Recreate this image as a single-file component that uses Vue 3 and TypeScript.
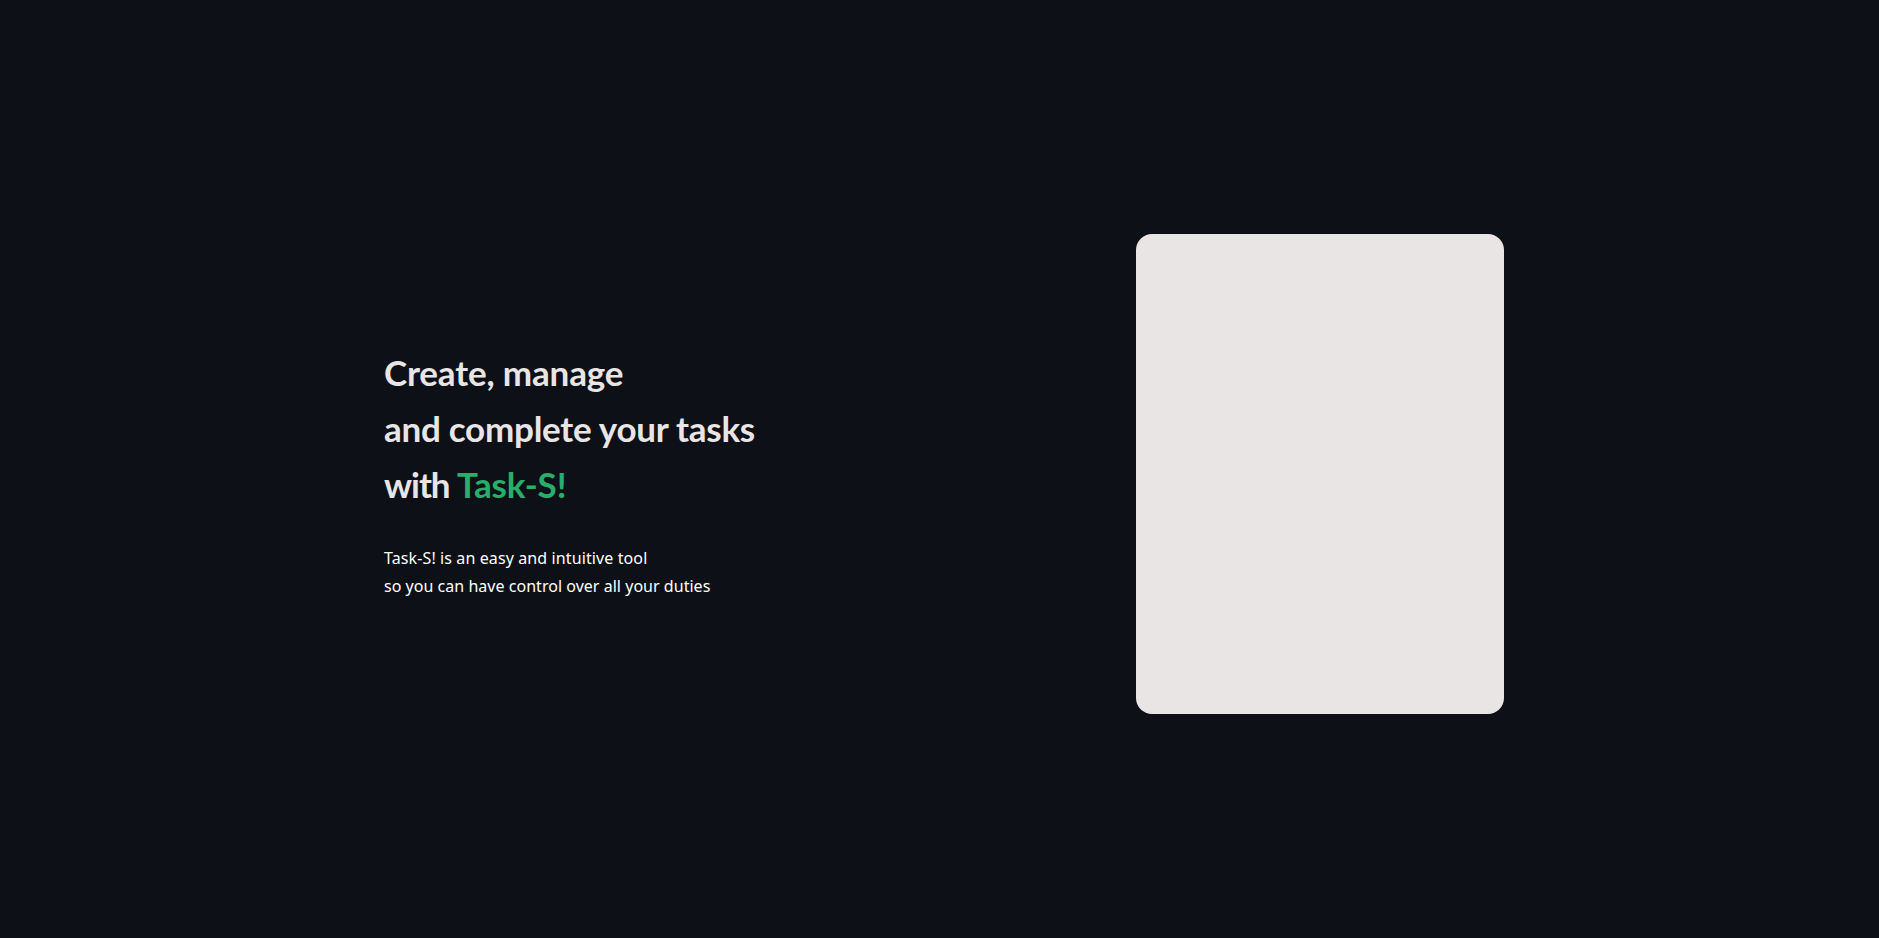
<script setup lang="ts">
interface Line {
  text: string
  accent?: string
  cls: string
}

const headline: Line[] = [
  { text: 'Create, manage', cls: 'h-create' },
  { text: 'and complete your tasks', cls: 'h-complete' },
  { text: 'with ', accent: 'Task-S!', cls: 'h-with' },
]

const description: Line[] = [
  { text: 'Task-S! is an easy and intuitive tool', cls: 'd-tool' },
  { text: 'so you can have control over all your duties', cls: 'd-duties' },
]
</script>

<template>
  <main class="page">
    <div class="content">
      <section class="intro">
        <h1 class="headline">
          <span v-for="line in headline" :key="line.cls" class="line"><span :class="line.cls">{{ line.text }}<span v-if="line.accent" class="accent">{{ line.accent }}</span></span></span>
        </h1>
        <p class="description">
          <span v-for="line in description" :key="line.cls" class="line"><span :class="line.cls">{{ line.text }}</span></span>
        </p>
      </section>
      <aside class="card"></aside>
    </div>
  </main>
</template>

<style>
html,
body {
  margin: 0;
  background: #0d1117;
}
</style>

<style scoped>
.page {
  box-sizing: border-box;
  min-height: 100vh;
  padding-top: 10px;
  display: flex;
  align-items: center;
  justify-content: center;
  overflow: hidden;
  background: #0d1117;
  font-family: 'Noto Sans', 'Open Sans', sans-serif;
}

.content {
  box-sizing: border-box;
  width: 1129px;
  padding-left: 9px;
  display: flex;
  align-items: center;
  justify-content: space-between;
}

.headline {
  margin: 0;
  font-family: Lato, 'Noto Sans', sans-serif;
  font-size: 35px;
  font-weight: 700;
  line-height: 56px;
  color: #e9e5e4;
}

.h-create {
  letter-spacing: -0.16px;
}

.h-complete {
  letter-spacing: -0.26px;
}

.h-with {
  letter-spacing: -1.05px;
}

.accent {
  color: #27ae6a;
  letter-spacing: -0.15px;
}

.description {
  margin: 32px 0 5px;
  font-size: 16px;
  line-height: 28px;
  color: #fff;
}

.d-tool {
  letter-spacing: 0.11px;
}

.d-duties {
  letter-spacing: 0.03px;
}

.line {
  display: block;
  white-space: pre;
}

.card {
  width: 368px;
  height: 480px;
  border-radius: 16px;
  background: #e9e5e4;
}
</style>
